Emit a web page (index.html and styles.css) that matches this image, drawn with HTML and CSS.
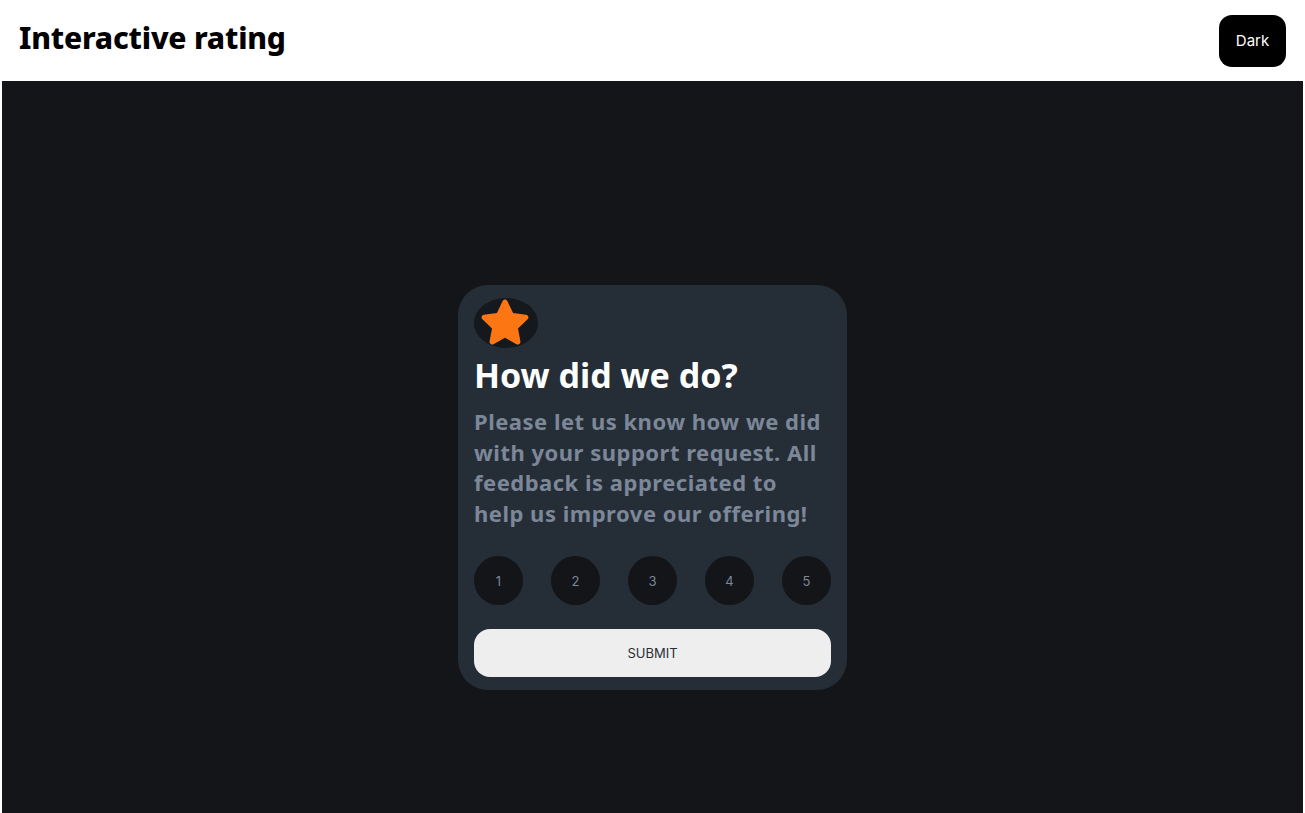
FILE: index.html
```html
<!DOCTYPE html>
<html lang="en">
<head>
<meta charset="utf-8">
<title>Interactive rating</title>
<link rel="stylesheet" href="styles.css">
</head>
<body>
<header class="topbar">
  <h1 class="brand">Interactive rating</h1>
  <button class="theme-btn">Dark</button>
</header>
<main class="stage">
  <section class="card">
    <div class="star-badge">
      <svg width="54" height="54" viewBox="0 0 24 24" aria-hidden="true">
        <path fill="#fc7614" d="M12 1.6c.45 0 .86.26 1.05.67l2.53 5.3 5.8.76c.45.06.83.38.96.81.14.44.02.91-.31 1.22l-4.25 4.03 1.06 5.76c.08.45-.1.9-.47 1.16-.37.27-.86.3-1.26.08L12 18.6l-5.11 2.79c-.4.22-.89.19-1.26-.08a1.17 1.17 0 0 1-.47-1.16l1.06-5.76-4.25-4.03a1.17 1.17 0 0 1-.31-1.22c.13-.43.51-.75.96-.81l5.8-.76 2.53-5.3c.19-.41.6-.67 1.050-.67z"/>
      </svg>
    </div>
    <h2 class="title">How did we do?</h2>
    <p class="desc">Please let us know how we did with your support request. All feedback is appreciated to help us improve our offering!</p>
    <div class="scale">
      <button class="num">1</button>
      <button class="num">2</button>
      <button class="num">3</button>
      <button class="num">4</button>
      <button class="num">5</button>
    </div>
    <button class="submit">SUBMIT</button>
  </section>
</main>
</body>
</html>
```
FILE: styles.css
```css
html, body {
  margin: 0;
  padding: 0;
  background: #ffffff;
}
body {
  font-family: "Noto Sans", sans-serif;
}
.topbar {
  height: 81px;
  display: flex;
  align-items: center;
  justify-content: space-between;
  padding: 0 19px;
  box-sizing: border-box;
}
.brand {
  margin: 0 0 6px;
  font-family: "Noto Sans", sans-serif;
  font-weight: 800;
  font-size: 30px;
  color: #000;
  letter-spacing: -0.2px;
}
.theme-btn {
  background: #000;
  color: #fff;
  border: none;
  border-radius: 13px;
  width: 67px;
  height: 52px;
  font-family: "Inter", sans-serif;
  font-size: 15px;
}
.stage {
  margin: 0 2px;
  background: #131518;
  height: 813px;
  display: flex;
  align-items: center;
  justify-content: center;
}
.card {
  width: 389px;
  box-sizing: border-box;
  background: #252d37;
  border-radius: 30px;
  padding: 13px 16px;
}
.star-badge {
  width: 64px;
  height: 50px;
  border-radius: 50%;
  background: #15181c;
  display: flex;
  align-items: center;
  justify-content: center;
}
.star-badge svg {
  margin-left: -2px;
}
.title {
  margin: 6px 0 0;
  color: #ffffff;
  font-weight: 700;
  font-size: 34px;
  line-height: 42px;
  letter-spacing: 0;
}
.desc {
  margin: 10px 0 0;
  color: #7c8798;
  font-weight: 700;
  font-size: 22px;
  line-height: 30.5px;
  letter-spacing: 0.5px;
}
.scale {
  display: flex;
  justify-content: space-between;
  margin-top: 28px;
}
.num {
  width: 49px;
  height: 49px;
  border-radius: 50%;
  border: none;
  background: #131518;
  color: #7c8798;
  font-family: "Inter", sans-serif;
  font-size: 13px;
  padding: 0;
}
.submit {
  display: block;
  width: 100%;
  height: 48px;
  margin-top: 24px;
  border: none;
  border-radius: 16px;
  background: #eeeeee;
  color: #2a2f36;
  font-family: "Inter", sans-serif;
  font-size: 13px;
}
```
